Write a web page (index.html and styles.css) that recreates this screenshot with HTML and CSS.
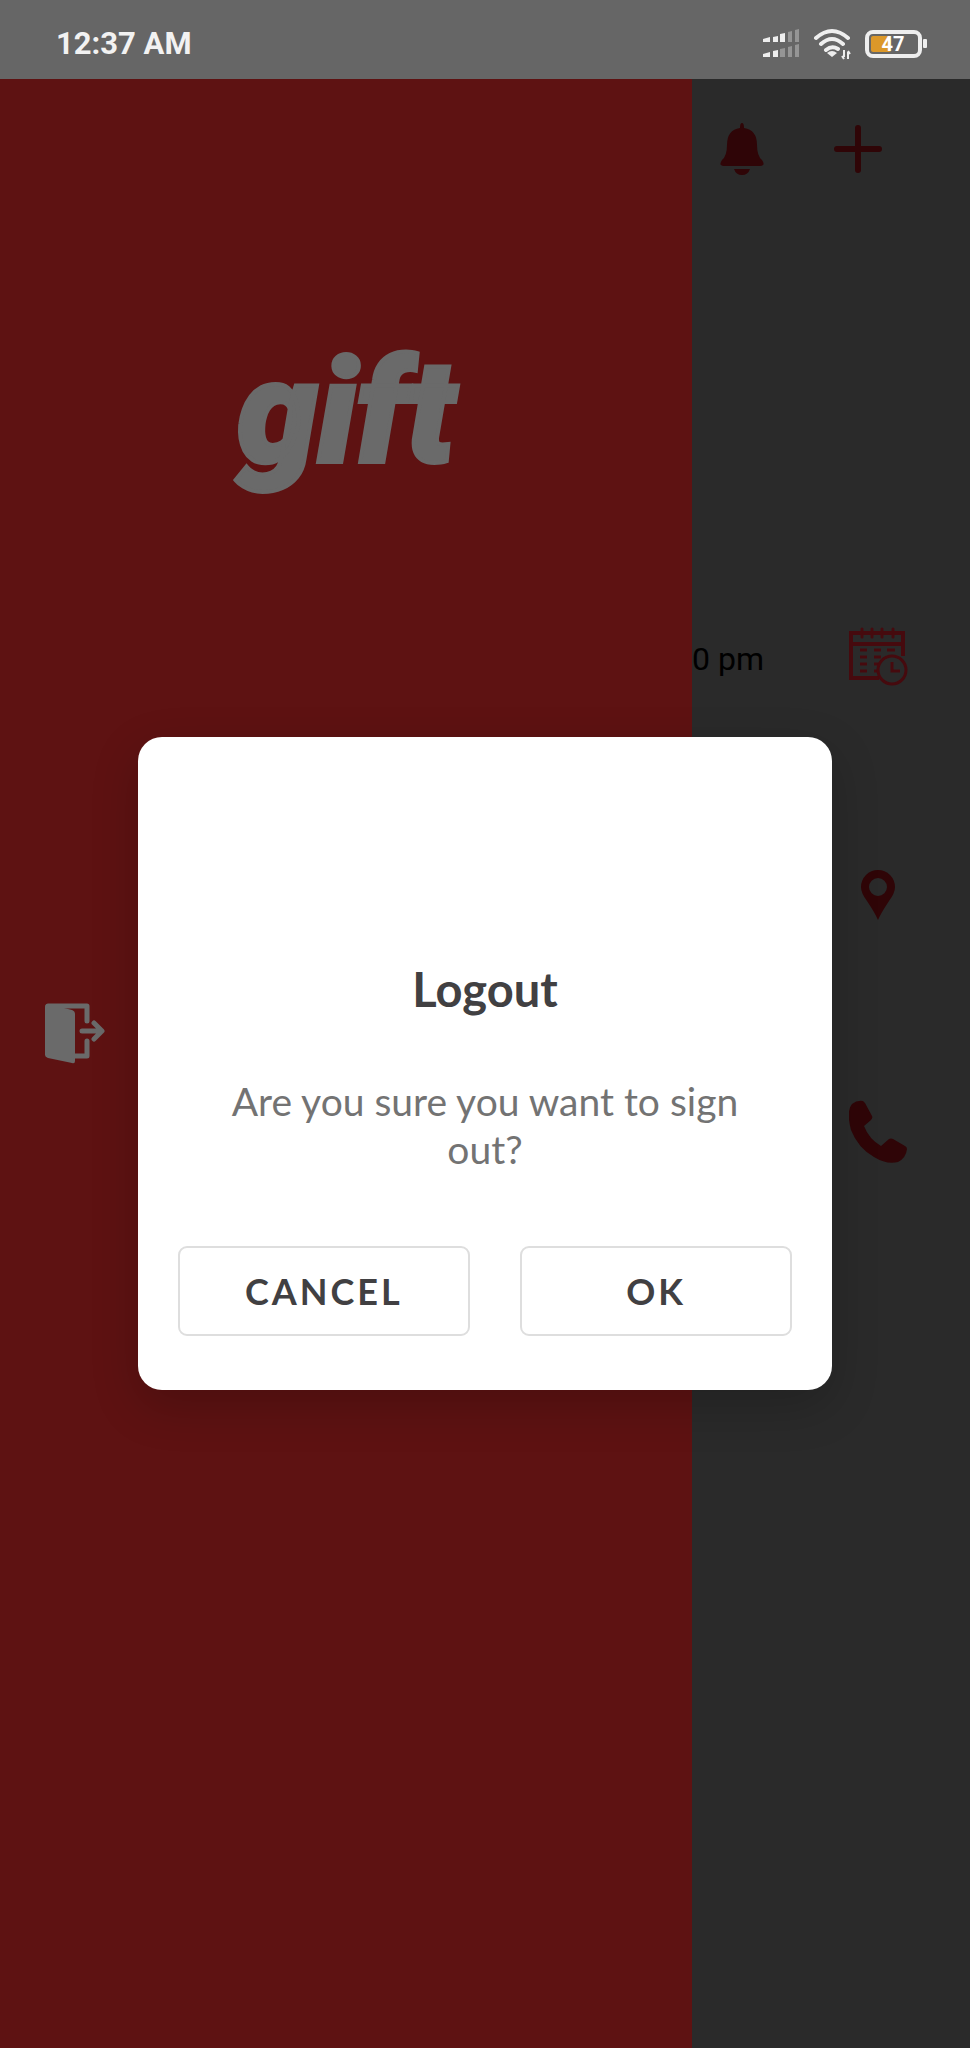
FILE: index.html
```html
<!DOCTYPE html>
<html lang="en">
<head>
<meta charset="utf-8">
<meta name="viewport" content="width=device-width, initial-scale=1">
<title>Gift</title>
<link rel="stylesheet" href="styles.css">
</head>
<body>
<header class="status">
  <time class="clock">12:37 AM</time>
  <div class="status-icons">
    <svg class="signal" viewBox="0 0 38 30" aria-hidden="true">
      <g fill="#eee"><path d="M0 10l7-2v5H0zM10 8l5-1v6h-5zM17 5l5-1v9h-5zM0 25l7-2v5H0zM10 22l5-1v7h-5z"/></g>
      <g fill="#959595"><path d="M25 3l4-1v11h-4zM32 1l4-1v13h-4zM17 20l5-1v9h-5zM25 18l4-1v11h-4zM32 16l4-1v13h-4z"/></g>
    </svg>
    <svg class="wifi" viewBox="0 0 40 32" aria-hidden="true">
      <g fill="none" stroke="#eee" stroke-width="4" stroke-linecap="round"><path d="M3 10Q19-4 35 10M8 16Q19 6 30 16M13 22Q19 17 25 21"/></g>
      <path d="M14 25Q19 21 24 25L19 29z" fill="#eee"/>
      <path d="M31 22v7M29 28l2 3M35 31v-7M35 23l2 3" fill="none" stroke="#eee" stroke-width="2"/>
    </svg>
    <svg class="battery" viewBox="0 0 62 28" aria-hidden="true">
      <rect x="2" y="2" width="53" height="24" rx="6" fill="none" stroke="#eee" stroke-width="4"/>
      <rect x="6" y="6" width="20" height="16" rx="2" fill="#dc9829"/>
      <rect x="58" y="9" width="4" height="9" rx="1" fill="#eee"/>
      <text x="28" y="21" text-anchor="middle" class="charge">47</text>
    </svg>
  </div>
</header>
<div class="stage">
  <nav class="drawer" aria-label="Menu">
    <div class="brand">gift</div>
    <button class="icon-button signout" aria-label="Sign out">
      <svg width="60" height="62" viewBox="0 0 60 62" aria-hidden="true">
        <path d="M0 4Q0 1 3 1L27 7Q30 8 30 11V58Q30 61 27 60L3 55Q0 54 0 52z" fill="currentColor"/>
        <g fill="none" stroke="currentColor" stroke-width="5" stroke-linecap="round" stroke-linejoin="round"><path d="M3 3H42V18M42 38V53H29M37 28H56M49 20L57 28L49 36"/></g>
      </svg>
    </button>
  </nav>
  <main class="page">
    <div class="toolbar">
      <button class="icon-button" aria-label="Notifications">
        <svg width="44" height="52" viewBox="0 0 44 52" aria-hidden="true"><path d="M22 0Q24 0 24 5Q37 7 37 22Q37 33 42 37Q46 43 40 43H4Q-2 43 2 37Q7 33 7 22Q7 7 20 5Q20 0 22 0zM14 46H30Q28 52 22 52Q16 52 14 46z" fill="currentColor"/></svg>
      </button>
      <button class="icon-button" aria-label="Add">
        <svg width="50" height="50" viewBox="0 0 50 50" aria-hidden="true"><path d="M25 4V46M4 25H46" stroke="currentColor" stroke-width="6" stroke-linecap="round"/></svg>
      </button>
    </div>
    <div class="row hours">
      <span class="time">0 pm</span>
      <svg width="60" height="60" viewBox="0 0 60 60" fill="none" stroke="currentColor" aria-hidden="true">
        <path d="M30 51H2V6H54V29M2 17H54" stroke-width="4"/>
        <path d="M13 2V10M23 2V10M33 2V10M44 2V10" stroke-width="3" stroke-linecap="round"/>
        <path d="M11 23H18M25 23H32M38 23H46M11 30H18M25 30H32M11 37H18M25 37H30M11 44H18M25 44H29" stroke-width="3"/>
        <circle cx="43" cy="43" r="14" stroke-width="3"/>
        <path d="M43 35V44H51" stroke-width="3"/>
      </svg>
    </div>
    <div class="row place">
      <svg width="58" height="50" viewBox="0 0 58 50" aria-hidden="true"><path fill-rule="evenodd" d="M29 50Q26 43 18 31Q12 23 12 17A17 17 0 0 1 46 17Q46 23 40 31Q32 43 29 50zM29 8A9 9 0 1 0 29 26A9 9 0 1 0 29 8z" fill="currentColor"/></svg>
    </div>
    <div class="row phone">
      <svg width="58" height="64" viewBox="0 0 58 64" aria-hidden="true"><path d="M3 4Q8 0 14 1L16 3L23 16Q24 18 22 20L15 26Q20 39 32 46L40 39Q42 38 44 39L56 46Q58 47 58 49Q57 58 49 62Q38 65 25 57Q9 48 2 30Q-3 11 3 4z" fill="currentColor"/></svg>
    </div>
  </main>
  <div class="overlay">
    <section class="dialog" role="alertdialog" aria-modal="true" aria-labelledby="title" aria-describedby="message">
      <h1 class="title" id="title">Logout</h1>
      <p class="message" id="message">Are you sure you want to sign out?</p>
      <div class="actions">
        <button class="action">CANCEL</button>
        <button class="action">OK</button>
      </div>
    </section>
  </div>
</div>
</body>
</html>
```

FILE: styles.css
```css
* { box-sizing: border-box; }
body {
  margin: 0;
  min-height: 100vh;
  display: flex;
  flex-direction: column;
  background: #2a2a2a;
  font-family: Lato, "Liberation Sans", sans-serif;
}
.status {
  display: flex;
  justify-content: space-between;
  align-items: center;
  padding: 20px 43px 12px 56px;
  min-height: 79px;
  background: #666;
}
.clock {
  font: 700 31px/36px Roboto, sans-serif;
  color: #f2f2f2;
}
.status-icons { display: flex; align-items: center; gap: 12px; }
.signal { width: 38px; height: 30px; }
.wifi { width: 40px; height: 32px; }
.battery { width: 62px; height: 28px; }
.charge { font: 700 20px Roboto, sans-serif; fill: #fff; }
.stage {
  position: relative;
  flex: 1;
  display: grid;
  grid-template-columns: 692fr 278fr;
}
.drawer {
  background: #5e1212;
  color: #6a6a6a;
}
.brand {
  padding-top: 244px;
  text-align: center;
  font: italic 900 144px/180px Roboto, sans-serif;
  -webkit-text-stroke: 4px #6a6a6a;
}
.icon-button {
  display: block;
  padding: 0;
  border: 0;
  background: none;
  color: inherit;
}
.icon-button svg, .row svg { display: block; }
.signout { margin: 500px 0 0 45px; }
.page { color: #2f0507; min-width: 0; }
.toolbar {
  display: flex;
  align-items: center;
  gap: 69px;
  padding: 44px 28px 0;
}
.row { display: flex; justify-content: flex-end; padding-right: 63px; }
.hours {
  justify-content: space-between;
  align-items: flex-end;
  margin-top: 452px;
  padding-right: 61px;
  color: #460a0e;
}
.time { padding-bottom: 8px; font: 400 32px/40px Roboto, sans-serif; color: #000; }
.place { margin-top: 183px; }
.phone { margin-top: 180px; }
.overlay {
  position: absolute;
  inset: 0;
  display: grid;
  place-items: center;
}
.dialog {
  width: 71.6%;
  padding: 224px 40px 54px;
  border-radius: 24px;
  background: #fff;
  box-shadow: 0 16px 48px rgba(0, 0, 0, 0.2);
  text-align: center;
}
.title {
  margin: 0;
  font-size: 47px;
  line-height: 56px;
  font-weight: 700;
  color: #414042;
}
.message {
  margin: 60px 44px 0;
  font-size: 39px;
  line-height: 48px;
  color: #737373;
}
.actions {
  display: grid;
  grid-template-columns: 73fr 68fr;
  gap: 50px;
  margin-top: 73px;
}
.action {
  height: 90px;
  padding: 0;
  border: 2px solid #dedede;
  border-radius: 9px;
  background: #fff;
  color: #414042;
  font: 700 36px/44px Lato, sans-serif;
  letter-spacing: 3px;
}
```
